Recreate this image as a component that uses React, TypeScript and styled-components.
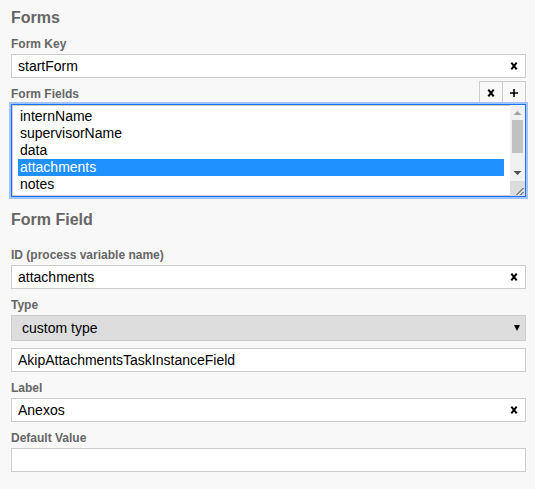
import React, { useState } from "react";
import styled, { createGlobalStyle } from "styled-components";

const GlobalStyle = createGlobalStyle`
  * { box-sizing: border-box; }
  body {
    margin: 0;
    background: #f8f8f8;
    color: #000;
    font-family: Arial, "Liberation Sans", sans-serif;
    font-size: 14px;
  }
`;

const Panel = styled.form`
  display: flex;
  flex-direction: column;
  padding: 8px 9px 16px 11px;
`;

const GroupTitle = styled.h2<{ $spaced?: boolean }>`
  margin: ${(p) => (p.$spaced ? "13px 0 10px" : "0 0 1px")};
  font-size: 16px;
  line-height: 19px;
  font-weight: bold;
  color: #666;
`;

const Entry = styled.div`
  display: flex;
  flex-direction: column;
  padding-top: 9px;
`;

const Label = styled.label`
  margin-bottom: 3px;
  font-size: 12px;
  line-height: 14px;
  font-weight: bold;
  color: #666;
`;

const FieldBox = styled.div<{ $spaced?: boolean }>`
  display: flex;
  height: 24px;
  margin-top: ${(p) => (p.$spaced ? "7px" : "0")};
  border: 1px solid #ccc;
  background: #fff;
`;

const TextInput = styled.input`
  flex: 1;
  min-width: 0;
  padding: 0 6px;
  border: 0;
  outline: none;
  background: transparent;
  color: #000;
  font: inherit;
`;

const IconButton = styled.button`
  display: grid;
  place-items: center;
  width: 22px;
  padding: 0;
  border: 0;
  background: transparent;
  color: #000;
`;

const ListHeader = styled.div`
  display: flex;
  justify-content: space-between;
  align-items: flex-end;
  padding-top: 3px;
`;

const ListActions = styled.div`
  display: flex;
  height: 23px;
  border: 1px solid #ccc;
  border-bottom: 0;

  button + button {
    width: 23px;
    border-left: 1px solid #ccc;
  }
`;

const ListFrame = styled.div`
  display: flex;
  height: 93px;
  border: 1px solid #1a73ff;
  box-shadow: 0 0 0 2px #a3c4fb;
  background: #fff;
`;

const FieldList = styled.select`
  flex: 1;
  min-width: 0;
  height: 91px;
  padding: 2px 6px 2px 5px;
  border: 1px solid #ccc;
  border-right: 0;
  border-radius: 0;
  outline: none;
  background: transparent;
  color: #000;
  font: inherit;
  scrollbar-width: none;

  option {
    min-height: 17px;
    padding: 0 2px;
    line-height: 17px;
  }
  option:checked {
    color: #fff;
    background: #1e90ff linear-gradient(#1e90ff, #1e90ff);
  }
`;

const SelectBox = styled.div`
  display: grid;
  align-items: center;
  height: 26px;
  border: 1px solid #ccc;
  background: #ddd;

  > * { grid-area: 1 / 1; }
  > svg { justify-self: end; margin-right: 5px; pointer-events: none; }
`;

const TypeSelect = styled.select`
  width: 100%;
  height: 24px;
  padding: 0 10px;
  border: 0;
  outline: none;
  appearance: none;
  background: transparent;
  color: #000;
  font: inherit;
`;

const CrossIcon = () => (
  <svg width="8" height="8" viewBox="0 0 8 8" aria-hidden="true">
    <path d="M1.3 0.7 L6.7 7.3 M6.7 0.7 L1.3 7.3" stroke="currentColor" strokeWidth="2" />
  </svg>
);

const PlusIcon = () => (
  <svg width="8" height="8" viewBox="0 0 8 8" aria-hidden="true">
    <path d="M4 0 V8 M0 4 H8" stroke="currentColor" strokeWidth="1.6" />
  </svg>
);

const CaretIcon = () => (
  <svg width="6" height="6" viewBox="0 0 6 6" aria-hidden="true">
    <path d="M0 0 H6 L3 6 Z" fill="#000" />
  </svg>
);

const ScrollRail = () => (
  <svg width="15" height="91" viewBox="0 0 15 91" aria-hidden="true">
    <rect width="15" height="77" fill="#f1f1f1" />
    <path d="M3.5 10 L7.5 6 L11.5 10 Z" fill="#a3a3a3" />
    <rect x="2" y="15" width="11" height="33" fill="#c1c1c1" />
    <path d="M3.5 66 H11.5 L7.5 70 Z" fill="#505050" />
    <rect y="76" width="15" height="15" fill="#dcdcdc" />
    <path d="M6.5 90 L13.5 83 M10.5 90 L13.5 87" stroke="#333" fill="none" />
  </svg>
);

interface FieldProps {
  id: string;
  label?: string;
  name?: string;
  initial: string;
  clearable?: boolean;
}

function TextField({ id, label, name, initial, clearable }: FieldProps) {
  const [value, setValue] = useState(initial);
  const box = (
    <FieldBox $spaced={!label}>
      <TextInput id={id} aria-label={name} value={value} onChange={(e) => setValue(e.target.value)} />
      {clearable && (
        <IconButton type="button" aria-label="Clear" onClick={() => setValue("")}>
          <CrossIcon />
        </IconButton>
      )}
    </FieldBox>
  );
  if (!label) return box;
  return (
    <Entry>
      <Label htmlFor={id}>{label}</Label>
      {box}
    </Entry>
  );
}

const fields = ["internName", "supervisorName", "data", "attachments", "notes", "status"];

export default function App() {
  const [selected, setSelected] = useState("attachments");
  return (
    <>
      <GlobalStyle />
      <Panel>
        <GroupTitle>Forms</GroupTitle>
        <TextField id="form-key" label="Form Key" initial="startForm" clearable />
        <ListHeader>
          <Label htmlFor="form-fields">Form Fields</Label>
          <ListActions>
            <IconButton type="button" aria-label="Remove field"><CrossIcon /></IconButton>
            <IconButton type="button" aria-label="Add field"><PlusIcon /></IconButton>
          </ListActions>
        </ListHeader>
        <ListFrame>
          <FieldList id="form-fields" size={5} value={selected} onChange={(e) => setSelected(e.target.value)}>
            {fields.map((f) => <option key={f}>{f}</option>)}
          </FieldList>
          <ScrollRail />
        </ListFrame>
        <GroupTitle $spaced>Form Field</GroupTitle>
        <TextField id="field-id" label="ID (process variable name)" initial="attachments" clearable />
        <Entry>
          <Label htmlFor="field-type">Type</Label>
          <SelectBox>
            <TypeSelect id="field-type" defaultValue="custom type">
              <option>string</option>
              <option>long</option>
              <option>boolean</option>
              <option>date</option>
              <option>enum</option>
              <option>custom type</option>
            </TypeSelect>
            <CaretIcon />
          </SelectBox>
        </Entry>
        <TextField id="custom-type" name="Custom type" initial="AkipAttachmentsTaskInstanceField" />
        <TextField id="field-label" label="Label" initial="Anexos" clearable />
        <TextField id="default-value" label="Default Value" initial="" />
      </Panel>
    </>
  );
}
